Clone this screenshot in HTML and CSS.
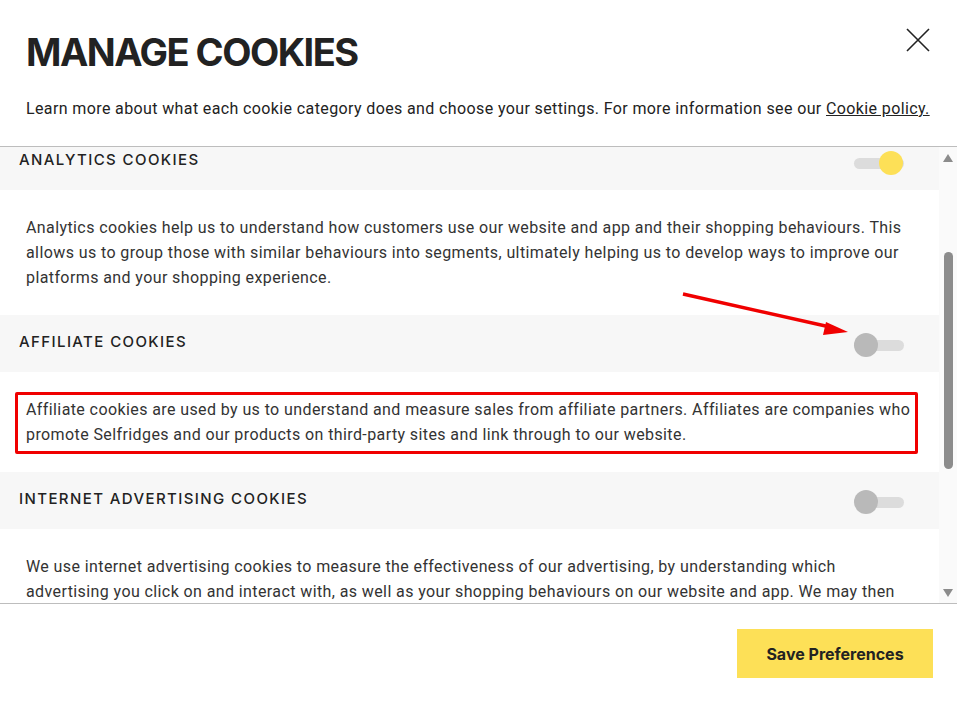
FILE: index.html
```html
<!DOCTYPE html>
<html lang="en">

<head>
    <meta charset="UTF-8">
    <meta name="viewport" content="width=device-width, initial-scale=1.0">
    <title>Manage Cookies</title>
    <link rel="stylesheet" href="styles.css">
</head>

<body>
    <div class="modal">
        <div class="modal-head">
            <h1>MANAGE COOKIES</h1>
            <button class="close" aria-label="Close">
                <svg width="24" height="24" viewBox="0 0 24 24">
                    <path d="M1 1 L23 23 M23 1 L1 23" stroke="#222" stroke-width="1.6" fill="none" />
                </svg>
            </button>
        </div>
        <p class="intro">Learn more about what each cookie category does and choose your settings. For more information see our <a href="#">Cookie policy.</a></p>

        <div class="scroll-area">
            <div class="panel">
                <div class="panel-inner">
                    <div class="cat-head">
                        <h2>ANALYTICS COOKIES</h2>
                        <span class="toggle on"><span class="knob"></span></span>
                    </div>
                    <div class="cat-body">
                        <p>Analytics cookies help us to understand how customers use our website and app and their shopping behaviours. This allows us to group those with similar behaviours into segments, ultimately helping us to develop ways to improve our platforms and your shopping experience.</p>
                    </div>

                    <div class="cat-head">
                        <h2>AFFILIATE COOKIES</h2>
                        <span class="toggle"><span class="knob"></span></span>
                    </div>
                    <div class="cat-body marked">
                        <p>Affiliate cookies are used by us to understand and measure sales from affiliate partners. Affiliates are companies who promote Selfridges and our products on third-party sites and link through to our website.</p>
                        <div class="mark-box"></div>
                    </div>

                    <div class="cat-head">
                        <h2>INTERNET ADVERTISING COOKIES</h2>
                        <span class="toggle"><span class="knob"></span></span>
                    </div>
                    <div class="cat-body">
                        <p>We use internet advertising cookies to measure the effectiveness of our advertising, by understanding which advertising you click on and interact with, as well as your shopping behaviours on our website and app. We may then share this information with our advertising partners.</p>
                    </div>
                </div>
            </div>
            <div class="scrollbar">
                <span class="arrow up"></span>
                <div class="track"><span class="thumb"></span></div>
                <span class="arrow down"></span>
            </div>
        </div>

        <div class="modal-foot">
            <button class="save">Save Preferences</button>
        </div>

        <svg class="annot" width="957" height="702" viewBox="0 0 957 702">
            <line x1="683" y1="294" x2="830" y2="327" stroke="#f00000" stroke-width="3.5" />
            <polygon points="848,332 826,322 823,335" fill="#f00000" />
        </svg>
    </div>
</body>

</html>
```

FILE: styles.css
```css
body {
    margin: 0;
    font-family: Roboto, "Liberation Sans", sans-serif;
    color: #2b2b2b;
    background-color: #fff;
}

.modal {
    position: relative;
    width: 957px;
    height: 702px;
    overflow: hidden;
}

.modal-head {
    display: flex;
    justify-content: space-between;
    align-items: flex-start;
    padding: 28px 27px 0 26px;
}

h1 {
    margin: 0;
    font-family: Inter, sans-serif;
    font-weight: 700;
    font-size: 38px;
    line-height: 48px;
    letter-spacing: -1.5px;
    color: #222;
}

.close {
    background: none;
    border: none;
    padding: 0;
    width: 24px;
    height: 24px;
    cursor: pointer;
}

.intro {
    margin: 21px 0 25px 26px;
    font-size: 16px;
    line-height: 24px;
    letter-spacing: 0.38px;
    white-space: nowrap;
    color: #222;
}

.intro a {
    color: #222;
}

.scroll-area {
    display: flex;
    height: 456px;
    border-top: 1px solid #bdbdbd;
    border-bottom: 1px solid #bdbdbd;
}

.panel {
    flex: 1;
    overflow: hidden;
}

.panel-inner {
    margin-top: -14px;
}

.cat-head {
    display: flex;
    justify-content: space-between;
    align-items: flex-start;
    height: 57px;
    padding: 0 35px 0 19px;
    background-color: #f7f7f7;
}

h2 {
    margin: 17px 0 0;
    font-family: Inter, sans-serif;
    font-weight: 500;
    font-size: 15px;
    line-height: 20px;
    letter-spacing: 1.4px;
    color: #222;
}

.toggle {
    position: relative;
    width: 50px;
    height: 24px;
    margin-top: 18px;
}

.toggle::before {
    content: "";
    position: absolute;
    left: 0;
    right: 0;
    top: 7px;
    height: 11px;
    border-radius: 6px;
    background-color: #dcdcdc;
}

.knob {
    position: absolute;
    left: 0;
    top: 0;
    width: 24px;
    height: 24px;
    border-radius: 50%;
    background-color: #b9b9b9;
}

.toggle.on .knob {
    left: auto;
    right: 1px;
    background-color: #fde057;
}

.cat-body {
    position: relative;
    padding: 25px 26px;
}

.cat-body p {
    margin: 0;
    font-size: 16px;
    line-height: 25px;
    letter-spacing: 0.4px;
    color: #333;
}

.mark-box {
    position: absolute;
    left: 15px;
    top: 20px;
    width: 897px;
    height: 56px;
    border: 3px solid #f00000;
    border-radius: 2px;
}

.scrollbar {
    width: 18px;
    background-color: #fafafa;
    display: flex;
    flex-direction: column;
    align-items: center;
}

.arrow {
    width: 0;
    height: 0;
    border-left: 5px solid transparent;
    border-right: 5px solid transparent;
}

.arrow.up {
    margin-top: 7px;
    border-bottom: 8px solid #8c8c8c;
}

.arrow.down {
    margin-bottom: 6px;
    border-top: 8px solid #8c8c8c;
}

.track {
    flex: 1;
    width: 10px;
}

.thumb {
    display: block;
    width: 9px;
    height: 217px;
    margin: 90px auto 0;
    border-radius: 5px;
    background-color: #8c8c8c;
}

.modal-foot {
    display: flex;
    justify-content: flex-end;
    padding: 25px 24px 0 0;
}

.save {
    width: 196px;
    height: 49px;
    border: none;
    background-color: #fde057;
    font-family: Inter, sans-serif;
    font-weight: 700;
    font-size: 16px;
    color: #222;
    cursor: pointer;
}

.annot {
    position: absolute;
    left: 0;
    top: 0;
    pointer-events: none;
}
```
